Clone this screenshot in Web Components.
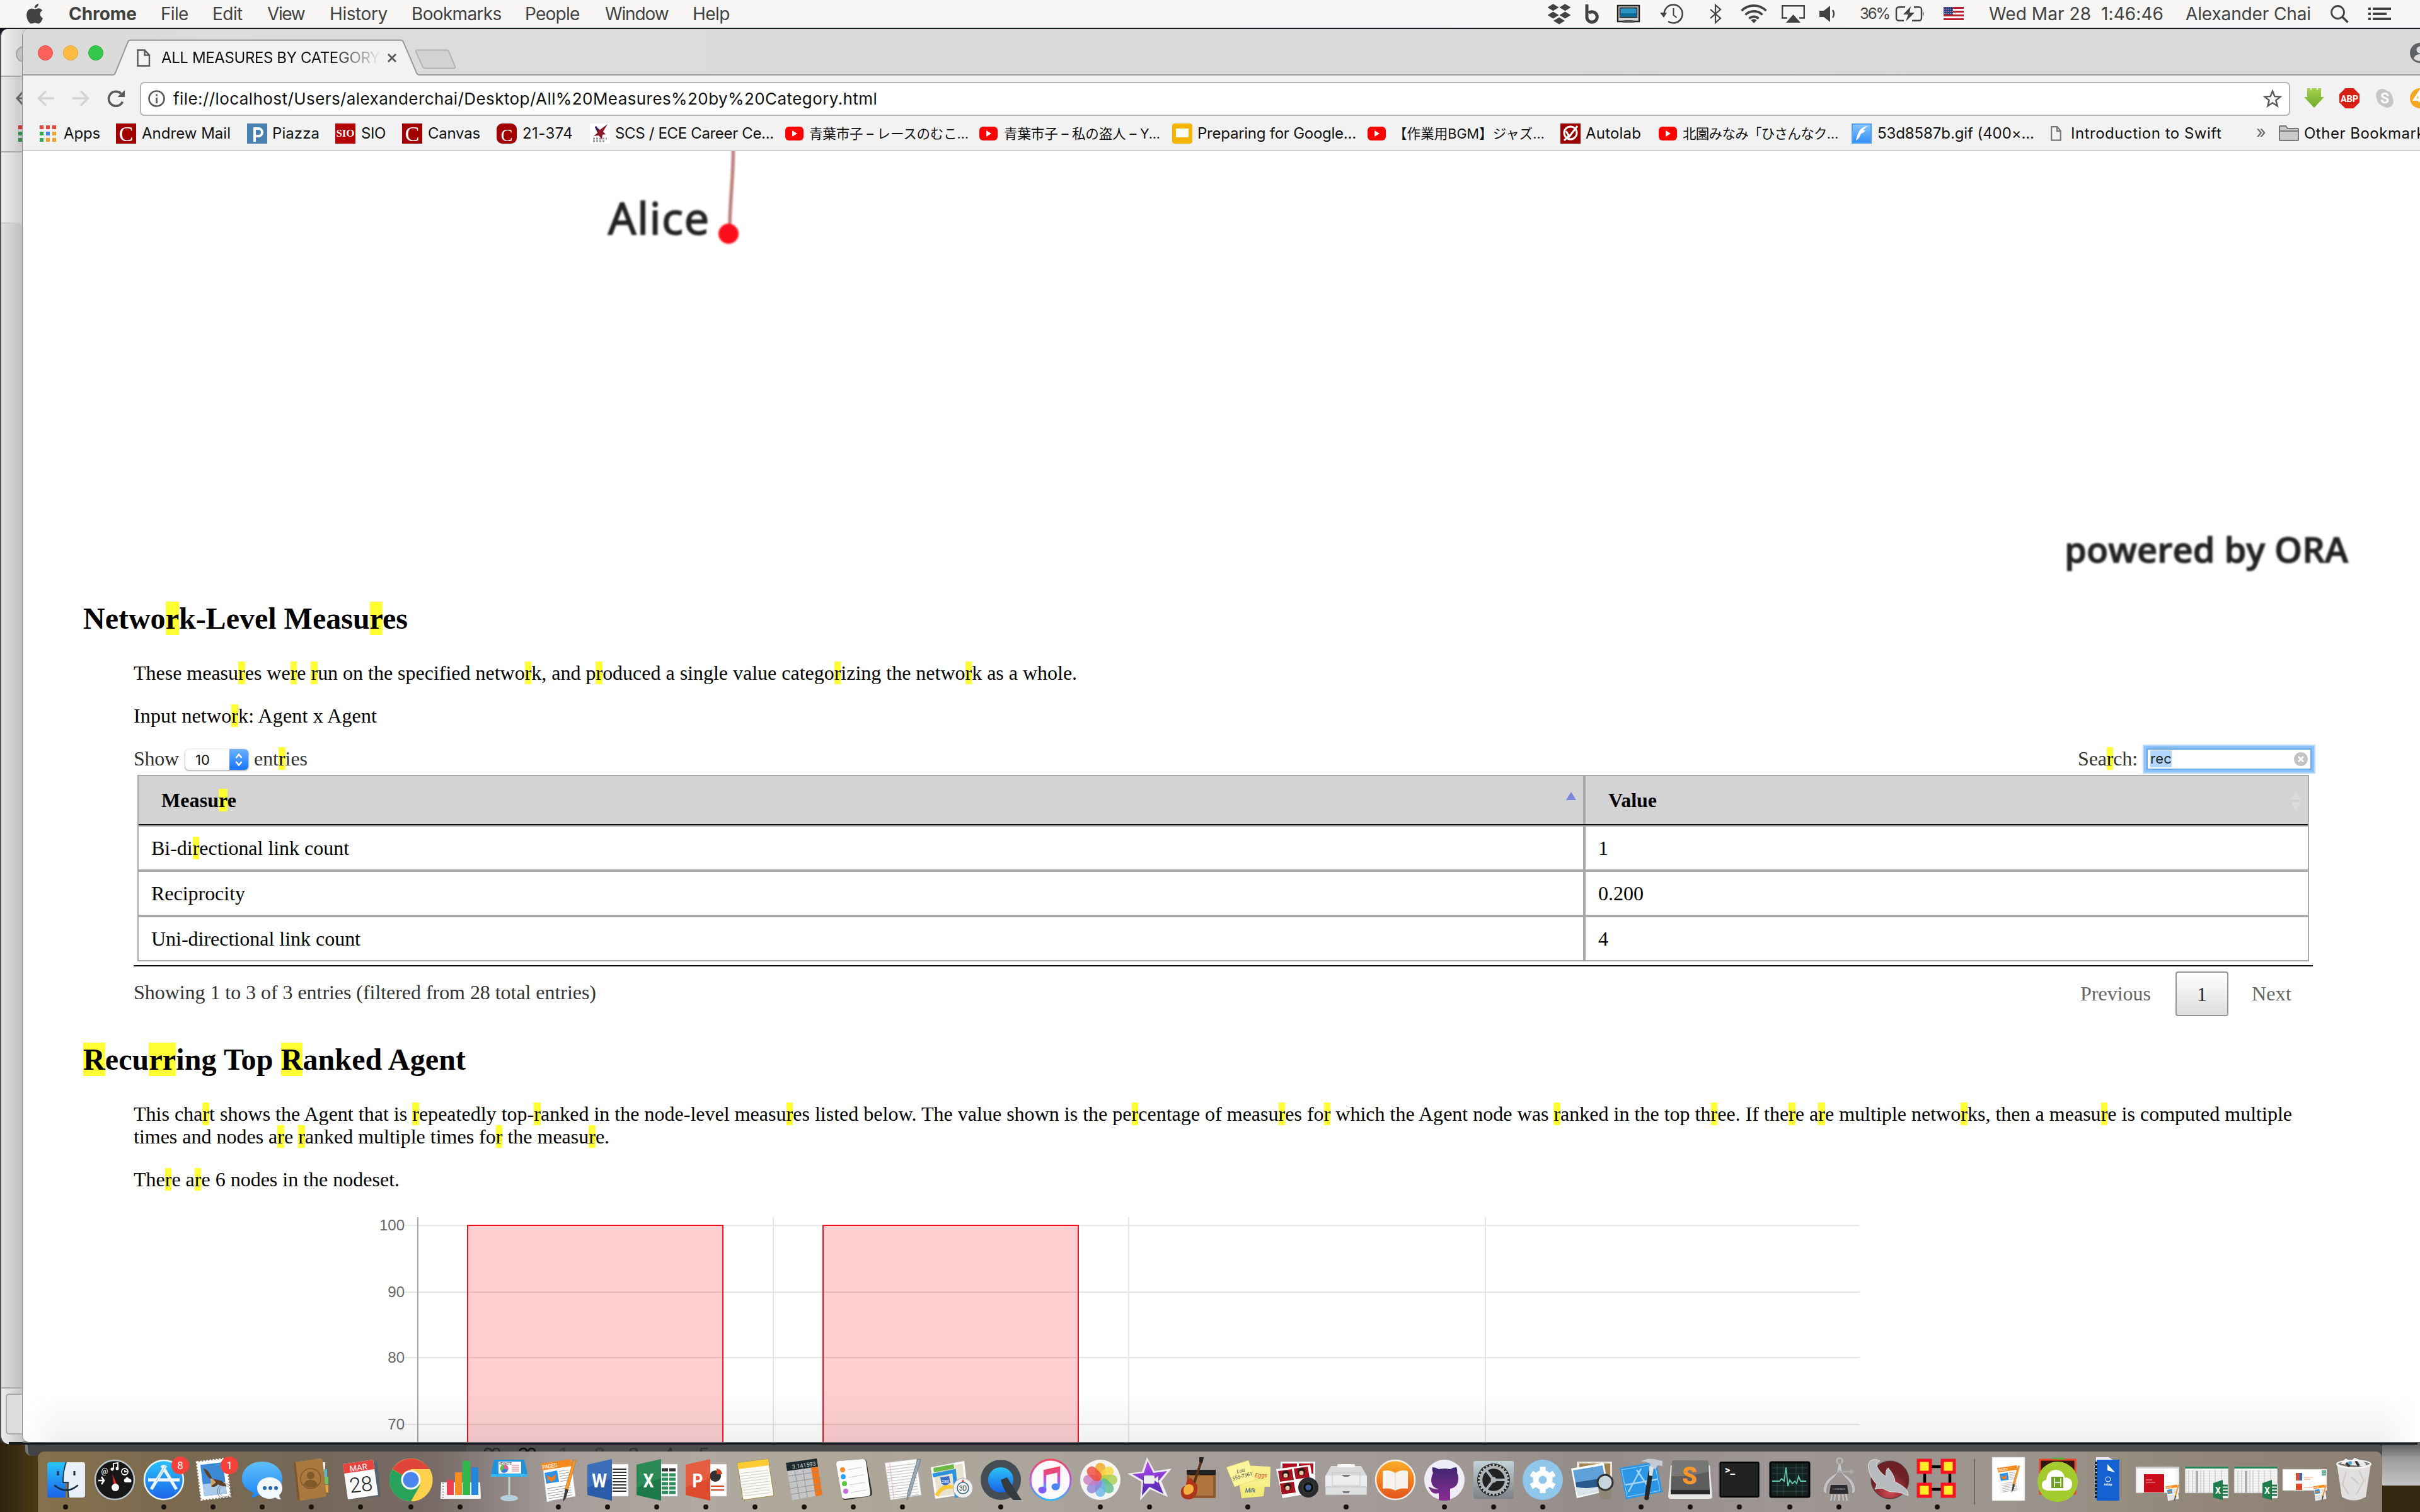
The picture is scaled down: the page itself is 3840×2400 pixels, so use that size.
<!DOCTYPE html>
<html lang="en">
<head>
<meta charset="utf-8">
<title>All Measures by Category</title>
<style>
html,body{margin:0;padding:0}
body{width:3840px;height:2400px;overflow:hidden;background:#3b2f19;font-family:Inter,"Noto Sans CJK JP",sans-serif}
</style>
</head>
<body>
<mac-desktop></mac-desktop>
<script>
const MARK = 'mark{background:#ffff33;color:#000}';
const attach = (el, html) => { el.attachShadow({mode:'open'}).innerHTML = html; };

/* Text whose tracking is adjusted so the run takes a given width. */
class FitText extends HTMLElement {
  connectedCallback() {
    if (!this.shadowRoot) attach(this, '<style>:host{display:inline-block;white-space:pre;flex:none}</style><slot></slot>');
    const w = parseFloat(this.getAttribute('w'));
    if (!w) return;
    const natural = this.getBoundingClientRect().width;
    const n = [...this.textContent].length;
    this.style.letterSpacing = ((w - natural) / Math.max(1, n - 0.5)).toFixed(3) + 'px';
    this.style.width = w + 'px';
  }
}
/* Lays items out left to right: [left edge, width, markup]. */
const strip = (start, items) => {
  let x = start;
  return items.map(([l, w, h]) => {
    const m = l - x; x = l + w;
    return `<span style="flex:none;display:flex;align-items:center;margin-left:${m}px;width:${w}px">${h}</span>`;
  }).join('');
};
const t = (w, s, extra='') => `<fit-text w="${w}" style="${extra}">${s}</fit-text>`;
const svg = (w, h, body, vb) => `<svg width="${w}" height="${h}" viewBox="${vb || `0 0 ${w} ${h}`}" style="display:block;flex:none;overflow:visible">${body}</svg>`;

class MenuBar extends HTMLElement {
  connectedCallback() {
    const c = '#424242';
    const dia = (x,y) => `<path d="M${x} ${y-5.5}l9 5.5-9 5.5-9-5.5z"/>`;
    const flag = `<rect width="32" height="22" fill="#fff"/>` + [0,1,2,3].map(i=>`<rect y="${i*6}" width="32" height="3" fill="#b5202c"/>`).join('') + `<rect width="15" height="12" fill="#343a7c"/>` + [2,5,8,11].map(y=>`<path d="M1.5 ${y-.5}h13" stroke="#cfd0e6" stroke-width="1" stroke-dasharray="1.3 1.6"/>`).join('');
    attach(this, `<style>
:host{display:flex;align-items:center;height:44px;background:#f7f6f5;color:${c};font:400 28px/44px Inter,sans-serif;flex:none}
</style>` + strip(0, [
      [42,26,svg(26,32,`<path fill="${c}" d="M19 0c.3 3-2.700 7-6.200 6.900C12.400 3.600 15.600.4 19 0zM13.300 8.600c1.600 0 3.300-1.300 6-1.300 2.500 0 4.600 1.300 5.900 3.200-5.100 3-4.300 10 .8 12.200C24.600 26.700 22 31.500 19 31.500c-2.200 0-3-1.300-5.600-1.300-2.600 0-3.500 1.300-5.600 1.300C4.200 31.500.200 24.400.200 18.200c0-7 4.300-10.800 8.300-10.800 2.300 0 3.800 1.200 4.800 1.200z"/>`)],
      [109,108,t(108,'Chrome','font-weight:700')],[255,44,t(44,'File')],[337,48,t(48,'Edit')],[424,60,t(60,'View')],[523,92,t(92,'History')],[653,143,t(143,'Bookmarks')],[833,87,t(87,'People')],[960,101,t(101,'Window')],[1099,59,t(59,'Help')],
      [2455,38,svg(38,32,`<g fill="${c}">${dia(9.5,5.700)}${dia(28.5,5.700)}${dia(9.5,18)}${dia(28.5,18)}${dia(19,27)}</g>`)],
      [2515,23,svg(23,32,`<path d="M3 1v21a8.200 8.200 0 1 0 3-7.500" fill="none" stroke="${c}" stroke-width="5"/>`)],
      [2566,36,svg(36,29,`<rect x="1" y="1" width="34" height="25" fill="#d8d8d8" stroke="#222" stroke-width="2.500"/><rect x="4.500" y="4.500" width="27" height="15" fill="#2a97c6" stroke="#111" stroke-width="1.500"/><rect x="5" y="13" width="26" height="6" fill="#106c94"/><path d="M8 28l3-4h14l3 4z" fill="#555"/>`)],
      [2634,38,svg(38,32,`<path d="M7 19A14.500 14.500 0 1 1 13 28" fill="none" stroke="${c}" stroke-width="2.500"/><path d="M0 14h11l-5 8z" fill="${c}"/><path d="M21.500 7v11l5 4" fill="none" stroke="${c}" stroke-width="2"/>`)],
      [2713,19,svg(19,32,`<path d="M1 9l16 14-8 7V2l8 7L1 23" fill="none" stroke="${c}" stroke-width="2.200"/>`)],
      [2762,42,svg(42,30,`<g fill="none" stroke="${c}" stroke-width="3.600"><path d="M1.500 10a27.500 27.500 0 0 1 39 0"/><path d="M7.500 16.500a19 19 0 0 1 27 0"/><path d="M13.500 22.500a10.600 10.600 0 0 1 15 0"/></g><path d="M21 30l-4.500-5a6.500 6.500 0 0 1 9 0z" fill="${c}"/>`)],
      [2827,37,svg(37,28,`<path d="M9 20.500H1.200V1.200h34.600v19.300H28" fill="none" stroke="${c}" stroke-width="2.400"/><path d="M18.500 15L30 28H7z" fill="${c}"/>`)],
      [2887,28,svg(28,26,`<path d="M0 8h7l10-8v26L7 18H0z" fill="${c}"/><path d="M21 7q4 6 0 12" fill="none" stroke="${c}" stroke-width="2.400"/>`)],
      [2951,48,t(48,'36%','font-size:24px')],
      [3008,46,svg(46,24,`<path d="M15 1.200H5a4 4 0 0 0-4 4v13.600a4 4 0 0 0 4 4h8M26 22.800h11a4 4 0 0 0 4-4V5.200a4 4 0 0 0-4-4h-8" fill="none" stroke="${c}" stroke-width="2.400"/><path d="M43 8q3 4 0 8z" fill="${c}"/><path d="M24 0L12 13h8l-4 11 14-14h-8z" fill="${c}"/>`)],
      [3084,32,svg(32,22,flag)],
      [3156,277,t(277,'Wed Mar 28  1:46:46')],[3468,199,t(199,'Alexander Chai')],
      [3698,29,svg(29,29,`<circle cx="11.500" cy="11.500" r="10" fill="none" stroke="${c}" stroke-width="2.800"/><path d="M18.500 18.500l9 9" stroke="${c}" stroke-width="3.400"/>`)],
      [3758,36,svg(36,20,`<g fill="${c}"><path d="M0 0h4v4H0zM0 8h4v4H0zM0 16h4v4H0zM7 0h29v4H7zM7 8h22v4H7zM7 16h29v4H7z"/></g>`)]
    ]));
  }
}

class TabStrip extends HTMLElement {
  connectedCallback() {
    attach(this, `<style>
:host{display:flex;height:74px;position:relative;background:linear-gradient(90deg,#d9dbd9,#dcdcdb 12%,#dddbd9 30%,#dbdbdb 55%,#dbd9d8 70%,#dadada);flex:none;overflow:hidden;border-radius:10px 0 0 0}
.edge{position:absolute;left:0;top:0}
.row{display:flex;align-items:center;height:76px;position:relative}
.fade{width:348px;overflow:hidden;-webkit-mask:linear-gradient(90deg,#000 77%,transparent 100%);mask:linear-gradient(90deg,#000 77%,transparent 100%);font:24px/34px Inter,sans-serif;color:#111;display:block;margin-top:15px}
</style>
<svg class="edge" width="3804" height="74"><path d="M0 72.700H143q3 0 4-3l20-49q1-3 4-3H600q3 0 4 3l21 49q1 3 4 3H3804V75H0z" fill="#f2f2f2"/><path d="M0 72.700H143q3 0 4-3l20-49q1-3 4-3H600q3 0 4 3l21 49q1 3 4 3H3804" fill="none" stroke="#979797" stroke-width="2"/><path d="M626 33.500h46q3 0 4 2l10 24q1 3-2 3h-45q-3 0-4-2l-11-24q-1-3 2-3z" fill="#d2d2d2" stroke="#b2b2b2" stroke-width="2"/></svg>
<div class="row">${strip(36,[
 [60,24,svg(24,24,'<circle cx="12" cy="12" r="11.500" fill="#fc605c" stroke="#e2443f"/>')],
 [100,24,svg(24,24,'<circle cx="12" cy="12" r="11.500" fill="#fdbc40" stroke="#e0a033"/>')],
 [140,24,svg(24,24,'<circle cx="12" cy="12" r="11.500" fill="#34c84a" stroke="#27aa35"/>')],
 [217,22,`<span style="margin-top:16px">${svg(22,28,'<path d="M1.500 1.500h11l7.500 8v17H1.500zM12.500 1.500v8H20" fill="none" stroke="#555" stroke-width="2.400"/>')}</span>`],
 [256,348,'<span class="fade">'+t(347,'ALL MEASURES BY CATEGORY')+'</span>'],
 [614,16,`<span style="margin-top:16px">${svg(16,14,'<path d="M2 1l12 12M14 1L2 13" stroke="#555" stroke-width="2.800"/>')}</span>`],
 [3824,32,svg(32,32,'<circle cx="16" cy="16" r="16" fill="#5f6368"/><circle cx="16" cy="11" r="5.500" fill="#ddd"/><path d="M6 25q2-7 10-7t10 7q-4 4-10 4t-10-4z" fill="#ddd"/>')]
])}</div>`);
  }
}

class ToolBar extends HTMLElement {
  connectedCallback() {
    attach(this, `<style>
:host{display:flex;align-items:center;height:72px;background:#f2f2f2;flex:none}
.omni{display:flex;align-items:center;box-sizing:border-box;width:3412px;height:54px;border:2px solid #b6b6b6;border-radius:7px;background:#fff;font:26px/50px Inter,sans-serif;color:#111;margin-top:1px}
</style>${strip(36,[
 [59,27,svg(27,26,'<path d="M27 13H3M14 1.500L2.500 13 14 24.500" fill="none" stroke="#d3d3d3" stroke-width="3.400"/>')],
 [115,27,svg(27,26,'<path d="M0 13h24M13 1.500L24.500 13 13 24.500" fill="none" stroke="#d3d3d3" stroke-width="3.400"/>')],
 [170,29,svg(29,27,'<path d="M24.500 18.500A11.500 11.500 0 1 1 22 5.500" fill="none" stroke="#5a5a5a" stroke-width="3.600"/><path d="M28 0v11H16.500z" fill="#5a5a5a"/>')],
 [222,3412,`<div class="omni">${strip(224,[[235,27,svg(27,27,'<circle cx="13.500" cy="13.500" r="12" fill="none" stroke="#5a5a5a" stroke-width="2.600"/><path d="M13.500 6.500v3M13.500 12v9" stroke="#5a5a5a" stroke-width="2.800"/>')],
   [275,1116,t(1117,'file://localhost/Users/alexanderchai/Desktop/All%20Measures%20by%20Category.html')],
   [3591,30,svg(30,29,'<path d="M15 2.500l3.400 8.500 9 .6-7 5.700 2.300 8.900-7.700-5-7.700 5 2.300-8.900-7-5.700 9-.6z" fill="none" stroke="#5a5a5a" stroke-width="2.500"/>')]])}</div>`],
 [3656,32,svg(32,32,'<defs><linearGradient id="g" x2="0" y2="1"><stop offset="0" stop-color="#a6d04d"/><stop offset="1" stop-color="#6fa92b"/></linearGradient></defs><path d="M5 0h5v3h2V0h8v3h2V0h5v14h5L16 31 0 14h5z" fill="url(#g)"/>')],
 [3712,32,svg(32,32,'<path d="M9.500 0h13L32 9.500v13L22.500 32h-13L0 22.500v-13z" fill="#d81f14"/><text x="16" y="21.500" font-family="Roboto,sans-serif" font-weight="700" font-size="14.500" fill="#fff" text-anchor="middle" textLength="28">ABP</text>')],
 [3768,32,svg(32,32,'<circle cx="12" cy="11" r="10" fill="#c6c6c6"/><circle cx="20" cy="21" r="10" fill="#c6c6c6"/><circle cx="16" cy="16" r="12.500" fill="#c6c6c6"/><text x="16" y="24" font-family="Roboto,sans-serif" font-weight="700" font-size="23" fill="#fff" text-anchor="middle">S</text>')],
 [3824,32,svg(32,32,'<circle cx="16" cy="16" r="16" fill="#f5a623"/><path d="M15 6v16M7 18L15 6v12z" stroke="#fff" stroke-width="3.500" fill="none"/>')]
])}`);
  }
}

class BookmarkBar extends HTMLElement {
  connectedCallback() {
    const yt = svg(30,22,'<rect width="29" height="22" rx="6" fill="#f00"/><path d="M11 6l8 5-8 5z" fill="#fff"/>');
    const C = (r) => svg(32,32,`<rect width="32" height="32" rx="${r}" fill="#a00000"/><text x="16" y="27.500" font-family="Liberation Serif,serif" font-size="${r?28:34}" fill="#fff" text-anchor="middle">C</text>`);
    const apps = svg(26,26, ['#ea4335','#ea4335','#ea4335','#34a853','#4285f4','#f0a020','#34a853','#f0a020','#f0a020'].map((c,i)=>`<rect x="${(i%3)*10}" y="${Math.floor(i/3)*10}" width="6" height="6" fill="${c}"/>`).join(''));
    const cjk = 'font-size:21.5px';
    const items = [
      [63,26,apps],[101,58,t(58,'Apps')],
      [184,32,C(0)],[225,141,t(141,'Andrew Mail')],
      [392,32,svg(32,32,'<rect width="32" height="32" fill="#4a80b0"/><path d="M12 29V8h6a5.500 5.500 0 0 1 0 12h-6" fill="none" stroke="#fff" stroke-width="4"/>')],[432,75,t(75,'Piazza')],
      [532,32,svg(32,32,'<rect width="32" height="32" fill="#b30000"/><text x="16" y="21" font-family="Liberation Serif,serif" font-weight="700" font-size="17" fill="#fff" text-anchor="middle" textLength="29">SIO</text>')],[573,39,t(39,'SIO')],
      [638,32,C(0)],[679,83,t(83,'Canvas')],
      [788,32,C(9)],[829,80,t(80,'21-374')],
      [936,32,svg(32,32,'<rect width="32" height="32" fill="#fff"/><path d="M28 1l-7 12 4 4-5 1-1 7-5-6-8 1 6-5-4-11 8 6z" fill="#8b1a2b"/><path d="M9 5l4 7" stroke="#302060" stroke-width="3"/><path d="M5 24h22M5 28h20" stroke="#999" stroke-width="3" stroke-dasharray="3 2"/>')],[976,252,t(252,'SCS / ECE Career Ce...')],
      [1246,30,yt],[1284,253,t(253,'青葉市子 – レースのむこ…',cjk)],
      [1554,30,yt],[1593,248,t(248,'青葉市子 – 私の盗人 – Y...',cjk)],
      [1860,32,svg(32,32,'<rect width="32" height="32" rx="4" fill="#f5b400"/><rect x="6" y="8" width="20" height="14" fill="#fff"/>')],[1900,252,t(252,'Preparing for Google...')],
      [2170,30,yt],[2211,240,t(240,'【作業用BGM】ジャズ…',cjk)],
      [2476,32,svg(32,32,'<rect width="32" height="32" fill="#900"/><circle cx="16" cy="15" r="10" fill="none" stroke="#fff" stroke-width="3"/><path d="M9 12l5 9L27 4M6 27l9-9" fill="none" stroke="#fff" stroke-width="3"/>')],[2516,88,t(88,'Autolab')],
      [2632,30,yt],[2670,247,t(247,'北園みなみ「ひさんなク…',cjk)],
      [2938,32,svg(32,32,'<defs><linearGradient id="b" x2="0" y2="1"><stop offset="0" stop-color="#8cc8fb"/><stop offset="1" stop-color="#2f8cf5"/></linearGradient></defs><rect width="32" height="32" fill="url(#b)"/><rect x="1" y="1" width="30" height="30" fill="none" stroke="#4da2f6" stroke-width="2"/><path d="M7 27C10 14 14 5 26 4c-5 3-5 5-8 7h4c-2 3-4 4-7 5-2 5-4 9-8 11z" fill="#fff"/>')],[2979,249,t(249,'53d8587b.gif (400×...')],
      [3254,17,svg(17,24,'<path d="M1.200 1.200h9l5.500 6.500v15H1.200zM10 1.200v7h6" fill="none" stroke="#777" stroke-width="2.200"/>')],[3286,239,t(239,'Introduction to Swift')],
      [3580,16,t(16,'»','color:#666;font-size:27px;margin-top:-3px')],
      [3616,32,svg(32,25,'<path d="M1 23V2q0-1 1-1h9l3 4h16q1 0 1 1v17q0 1-1 1H2q-1 0-1-1z" fill="#cbcbcb" stroke="#777" stroke-width="2"/><path d="M1 9h30" stroke="#777" stroke-width="2"/>')],[3656,205,t(205,'Other Bookmarks')]
    ];
    attach(this, `<style>:host{display:flex;align-items:center;padding-bottom:7px;background:#f2f2f2;border-bottom:2px solid #cfcfcf;font:24px/36px Inter,"Noto Sans CJK JP",sans-serif;color:#111;flex:none;overflow:hidden;box-sizing:border-box;height:48px}</style>` + strip(36, items));
  }
}

class NetworkGraph extends HTMLElement {
  connectedCallback() {
    attach(this, `<style>:host{display:block;height:714px}</style>
<svg width="3804" height="714" viewBox="36 240 3804 714" style="display:block">
<g style="filter:blur(1.400px)"><path d="M1163.500 232C1164 280 1158 320 1158 360" fill="none" stroke="#b98080" stroke-width="5.500"/>
<circle cx="1156" cy="371" r="16" fill="#fc0d1b"/>
<text x="965" y="372" font-family="Open Sans,sans-serif" font-size="70" fill="#222" stroke="#222" stroke-width="2" textLength="160">Alice</text>
<text x="3276" y="893" font-family="Open Sans,sans-serif" font-weight="600" font-size="56" fill="#222" stroke="#222" stroke-width="1.200" textLength="450">powered by ORA</text></g></svg>`);
  }
}

class PageSection extends HTMLElement {
  connectedCallback() {
    attach(this, `<style>
:host{display:block;padding-left:96px;font-family:"Liberation Serif",serif;color:#000}
.h{font-weight:700;font-size:48px;line-height:56px;height:56px;display:flex;margin-bottom:40px}
.b{padding-left:80px;font-size:32px;line-height:36px;width:3458px}
</style><div class="h"><slot name="title"></slot></div><div class="b"><slot></slot></div>`);
  }
}

class DataTable extends HTMLElement {
  connectedCallback() {
    const row = (a,b,last) => `<div class="r" style="border-bottom-width:${last?2:4}px"><div class="a">${a}</div><div class="v">${b}</div></div>`;
    attach(this, `<style>${MARK}
:host{display:block;font:32px/36px "Liberation Serif",serif;color:#000}
.ctl{display:flex;justify-content:space-between;height:36px;color:#333}
.g{display:flex;align-items:center}
.sel{display:flex;box-sizing:border-box;width:100px;height:33px;background:#fff;border-radius:6px;box-shadow:0 1px 2px 1px rgba(0,0,0,.28);font:22px/34px Inter,sans-serif;color:#111;margin:3px 9px 0 10px;overflow:hidden}
.sel span{flex:1;padding-left:16px}
.sel i{display:flex;width:30px;background:linear-gradient(#6bb1fb,#1676fd);align-items:center;justify-content:center}
.inp{display:flex;align-items:center;box-sizing:border-box;width:262px;height:34px;background:#fff;border:2px solid #67a9ea;box-shadow:0 0 0 4px #8cc1fa,0 0 1px 6px #b9dafb;margin:1px 2px 0 14px;padding:0 4px 0 4px;justify-content:space-between;font:22px/27px Inter,sans-serif;color:#222}
.inp b{font-weight:400;background:#b3d7ff}
.t{margin:8px 6px 6px;border:solid #a9a9a9;border-width:2px 2px 0}
.hd{display:flex;height:76px;background:#d3d3d3;border-bottom:2px solid #111;font-weight:700;box-shadow:0 2px 0 #a9a9a9;margin-bottom:2px}
.hd>div,.r>div{display:flex;align-items:center;box-sizing:border-box}
.a{width:2296px;border-right:4px solid #a9a9a9;padding-left:20px;flex:none}
.v{flex:1;padding-left:20px}
.hd .a,.hd .v{padding-left:36px;justify-content:space-between}
.r{display:flex;height:68px;border-bottom:4px solid #a9a9a9}
.ft{border-top:2px solid #111;height:122px;display:flex;justify-content:space-between;color:#333;align-items:flex-start;box-sizing:border-box}
.pg{display:flex;align-items:center;height:70px;margin-top:8px;padding-right:34px;color:#666}
.n{box-sizing:border-box;width:84px;height:71px;border:2px solid #979797;border-radius:4px;background:linear-gradient(#fff,#dcdcdc);display:flex;align-items:center;justify-content:center;margin:1px 37px 0 39px;color:#333}
</style>
<div class="ctl"><div class="g">${t(72,'Show')}<div class="sel"><span>10</span><i>${svg(14,22,'<path d="M2.500 8L7 2.500 11.500 8M2.500 14L7 19.500 11.500 14" fill="none" stroke="#fff" stroke-width="2.600"/>')}</i></div>${t(85,'ent<mark>r</mark>ies')}</div>
<div class="g">${t(95,'Sea<mark>r</mark>ch:')}<div class="inp"><b>${t(34,'rec')}</b>${svg(22,22,'<circle cx="11" cy="11" r="11" fill="#c3c3c3"/><path d="M7 7l8 8M15 7l-8 8" stroke="#fff" stroke-width="2.600"/>')}</div></div></div>
<div class="t"><div class="hd"><div class="a">${t(119,'Measu<mark>r</mark>e')}<span style="margin:-14px 11px 0 0">${svg(16,13,'<path d="M8 0l8 13H0z" fill="#7a82da"/>')}</span></div><div class="v">${t(77,'Value')}<span style="margin:2px 11px 0 0">${svg(16,30,'<path d="M8 0l8 13H0zM0 17h16L8 30z" fill="#dcdcdc"/>')}</span></div></div>
${row(t(314,'Bi-di<mark>r</mark>ectional link count'),'1')}${row(t(149,'Reciprocity'),'0.200')}${row(t(332,'Uni-directional link count'),'4',1)}</div>
<div class="ft"><div style="margin-top:23px">${t(734,'Showing 1 to 3 of 3 entries (filtered from 28 total entries)')}</div><div class="pg">${t(112,'Previous')}<div class="n">1</div>${t(63,'Next')}</div></div>`);
  }
}

class BarChart extends HTMLElement {
  connectedCallback() {
    const ys = [[1945,100],[2051,90],[2155,80],[2261,70]];
    attach(this, `<style>:host{display:block;margin-left:-176px}</style>
<svg width="3804" height="399" viewBox="36 1890 3804 399" style="display:block">
${ys.map(([y,n])=>`<path d="M642 ${y}H2951" stroke="#e4e4e4" stroke-width="2"/><text x="642" y="${y+8}" text-anchor="end" font-family="Liberation Sans,sans-serif" font-size="24" fill="#666">${n}</text>`).join('')}
${[1227,1791,2357].map(x=>`<path d="M${x} 1932V2289" stroke="#e4e4e4" stroke-width="2"/>`).join('')}
<path d="M663 1932V2289" stroke="#a8a8a8" stroke-width="2"/>
${[742,1306].map(x=>`<path d="M${x} 2300V1945h405V2300" fill="rgba(247,0,12,.19)" stroke="#f7101f" stroke-width="2"/>`).join('')}
</svg>`);
  }
}

class BrowserWindow extends HTMLElement {
  connectedCallback() {
    attach(this, `<style>${MARK}
:host{display:flex;flex-direction:column;box-sizing:border-box;width:3804px;height:2243px;background:#fff;border-radius:10px 0 0 10px;overflow:hidden;position:relative}
.sh{position:absolute;left:0;right:0;bottom:0;height:80px;background:linear-gradient(transparent,rgba(0,0,0,.06));-webkit-mask:linear-gradient(90deg,transparent,#000 60px,#000 3740px,transparent);mask:linear-gradient(90deg,transparent,#000 60px,#000 3740px,transparent)}
p{margin:0 0 32px;display:flex;flex-direction:column;align-items:flex-start}
</style><tab-strip></tab-strip><tool-bar></tool-bar><bookmark-bar></bookmark-bar>
<network-graph></network-graph>
<page-section><fit-text slot="title" w="515">Netwo<mark>r</mark>k-Level Measu<mark>r</mark>es</fit-text>
<p>${t(1497,'These measu<mark>r</mark>es we<mark>r</mark>e <mark>r</mark>un on the specified netwo<mark>r</mark>k, and p<mark>r</mark>oduced a single value catego<mark>r</mark>izing the netwo<mark>r</mark>k as a whole.')}</p>
<p>${t(386,'Input netwo<mark>r</mark>k: Agent x Agent')}</p>
<data-table></data-table></page-section>
<page-section><fit-text slot="title" w="607"><mark>R</mark>ecu<mark>rr</mark>ing Top <mark>R</mark>anked Agent</fit-text>
<p>${t(3425,'This cha<mark>r</mark>t shows the Agent that is <mark>r</mark>epeatedly top-<mark>r</mark>anked in the node-level measu<mark>r</mark>es listed below. The value shown is the pe<mark>r</mark>centage of measu<mark>r</mark>es fo<mark>r</mark> which the Agent node was <mark>r</mark>anked in the top th<mark>r</mark>ee. If the<mark>r</mark>e a<mark>r</mark>e multiple netwo<mark>r</mark>ks, then a measu<mark>r</mark>e is computed multiple')}${t(755,'times and nodes a<mark>r</mark>e <mark>r</mark>anked multiple times fo<mark>r</mark> the measu<mark>r</mark>e.')}</p>
<p style="margin:0">${t(422,'The<mark>r</mark>e a<mark>r</mark>e 6 nodes in the nodeset.')}</p>
<bar-chart></bar-chart></page-section><div class="sh"></div>`);
  }
}

/* The sliver of a second window that shows left of the front one. */
class BackWindow extends HTMLElement {
  connectedCallback() {
    attach(this, `<style>
:host{display:flex;flex-direction:column;box-sizing:border-box;width:60px;height:2246px;border-left:2px solid #4b5560;border-radius:12px 0 0 14px;overflow:hidden;background:#d5d5d5}
div{box-sizing:border-box;flex:none;border-bottom:2px solid #a9a9a9}
</style><div style="height:76px;background:linear-gradient(90deg,#f2f2f2,#d6d6d6 34px);border-radius:10px 0 0 0">${svg(34,74,'<circle cx="36" cy="40" r="12" fill="#c2c2c2" stroke="#a2a2a2" stroke-width="2"/>')}</div>
<div style="height:120px;background:linear-gradient(90deg,#ececec,#c8c8c8 34px)">${svg(34,118,'<path d="M36 22L25 34l11 12M25 34h10" fill="none" stroke="#666" stroke-width="3"/><rect x="27" y="77" width="7" height="6" fill="#c33"/><path d="M27 87h7v6h-7zM27 97h7v6h-7z" fill="#2c8a49"/>')}</div>
<div style="height:113px;background:linear-gradient(90deg,#eee,#ccc 34px);border-color:#ccc"></div>
<div style="flex:1;background:linear-gradient(90deg,#e0e0e0,#bdbdbd 34px)"></div>
<div style="height:88px;background:linear-gradient(90deg,#ededed,#c4c4c4 34px);border:0">${svg(34,88,'<path d="M40 9H13q-5 0-5 5v53q0 5 5 5h27" fill="#ddd" stroke="#aaa" stroke-width="2"/>')}</div>`);
  }
}

class DockBar extends HTMLElement {
  connectedCallback() {
    const tx = (x,y,s,size,fill,o='') => `<text x="${x}" y="${y}" font-family="Roboto,sans-serif" font-size="${size}" fill="${fill}" text-anchor="middle" ${o}>${s}</text>`;
    const badge = (n) => `<circle cx="26" cy="22" r="14" fill="#f6413b"/>` + tx(26,28,n,17,'#fff');
    const lines = (x,y,w,n,g,c='#bbb',sw=1) => Array.from({length:n},(_,i)=>`<path d="M${x} ${y+i*g}h${w}" stroke="${c}" stroke-width="${sw}"/>`).join('');
    const pages = (s=1) => `<g transform="translate(-30 12) scale(${s})"><path d="M5 9L50 1l7 58-45 9z" fill="#fff" stroke="#ccc" stroke-width=".7"/><path d="M2 7L50 0l2 11L4 18z" fill="#f58a1f"/><text transform="rotate(-9 6 16)" x="5" y="16" font-family="Roboto,sans-serif" font-size="9" fill="#fff" textLength="24">PAGES</text><path d="M8 22l20-4 3 18-20 3z" fill="#2e93e8"/><path d="M12 26l7 3 7-5-1 8-6 4-6-4z" fill="#f37a1d"/><g transform="rotate(-9 30 40)">${lines(34,20,16,5,4,'#999')}${lines(11,44,38,6,4,'#999')}</g><path d="M54 1l4 1-13 48-5-1z" fill="#f59a2a" stroke="#b66a12" stroke-width=".6"/><path d="M41 47l5 1-4 14-5 6z" fill="#3a3a3a"/></g>`;
    const office = (c1,c2,l,right) => `<rect x="4" y="20" width="29" height="51" fill="#fff" stroke="#bbb" stroke-width=".5"/>${right}<path d="M-32 21L7 12v66l-39-9z" fill="${c1}"/><path d="M-32 21L7 12v30l-39 15z" fill="${c2}" opacity=".35"/>${tx(-13,57,l,31,'#fff','font-weight="700" textLength="'+(l==='W'?24:17)+'" lengthAdjust="spacingAndGlyphs"')}`;
    const mini = (x) => `<g transform="translate(${x} 46)"><rect x="10" y="4" width="14" height="24" fill="#fff" stroke="#bbb" stroke-width=".5"/><path d="M12 8h11M12 13h11M12 18h11M12 23h11" stroke="#217346" stroke-width="3"/><path d="M0 4l15-5v32L0 27z" fill="#1f7d4b"/><text x="7.500" y="21" text-anchor="middle" font-family="Roboto" font-weight="700" font-size="14" fill="#fff">X</text></g>`;
    const petals = ['#f5a623','#f8d83a','#a6cf4d','#5dbd8d','#6ab6e8','#8d83d8','#c97cc0','#ef4d3c'].map((c,i)=>`<rect x="-8" y="18" width="16" height="27" rx="8" fill="${c}" opacity=".82" transform="rotate(${i*45} 0 45)"/>`).join('');
    const teeth = (n,r,w,h,c,cy=45) => Array.from({length:n},(_,i)=>`<rect x="${-w/2}" y="${cy-r-h}" width="${w}" height="${h+3}" fill="${c}" transform="rotate(${i*360/n} 0 ${cy})"/>`).join('');
    const sheet = (body) => `<rect x="-34" y="24" width="69" height="42" fill="#f5f5f5" stroke="#999" stroke-width=".8"/>${body}`;
    const excelWin = sheet(`<path d="M-34 24h69v3h-69z" fill="#21885a"/>${lines(-33,31,67,9,4,'#ddd',.8)}<path d="M-28 30v36M-22 30v36M-16 30v36M-9 30v36M-4 30v36M5 30v36M14 30v36M24 30v36" stroke="#bbb"/><rect x="-17" y="31" width="4" height="34" fill="#aaa"/>`) + mini(11);
    const G = {
      finder:`<path d="M-25 17H0V73h-25q-4 0-4-4V21q0-4 4-4z" fill="url(#fb)"/><path d="M2 17H27q4 0 4 4v48q0 4-4 4H5Q2 62 3 49H-4Q-4 30 2 17z" fill="#e9f0f8"/><path d="M1 17q-5 14-5 32h8q-1 12 1 24" fill="none" stroke="#16384e" stroke-width="1.800"/><path d="M-12 31v7M14 31v7" stroke="#102a40" stroke-width="3"/><path d="M-17 54Q1 69 19 54" fill="none" stroke="#102a40" stroke-width="2.500" stroke-linecap="round"/>`,
      dash:`<circle cy="45" r="31" fill="#161616" stroke="#b8c5cd" stroke-width="2.500"/><path d="M-4 36L-1 53q2 7 5 0z" fill="#f22c2c"/><circle cx="1" cy="57" r="6" fill="#fff"/><g fill="none" stroke="#fff" stroke-width="1.800"><circle cx="16" cy="32" r="5"/><path d="M16 29v3h3M-2 28V19l7-1v9"/></g><circle cx="-4" cy="28" r="2.500" fill="#fff"/><circle cx="4" cy="27" r="2.500" fill="#fff"/>${tx(-16,35,'@',12,'#fff')}<path d="M-26 46h10M-21 40l4 6-4 6" stroke="#fff" stroke-width="2.500" fill="none"/><path d="M16 49h10q2-5-3-6-4-5-6 0-4 1-1 6z" fill="#fff"/>`,
      store:`<circle cy="45" r="31" fill="url(#fb)" stroke="#eef6fc" stroke-width="2.500"/><path d="M-20 60L3 22M20 60L-3 22M-25 45h50" stroke="#eff7ff" stroke-width="5"/><path d="M-12 47L3 22" stroke="#8dbce8" stroke-width="1"/>${badge(8)}`,
      mail:`<g transform="rotate(-7 0 45)"><rect x="-22" y="14" width="46" height="60" fill="#fff"/><rect x="-22" y="14" width="46" height="60" fill="none" stroke="#fff" stroke-width="3" stroke-dasharray="3 2"/><rect x="-17" y="19" width="36" height="50" fill="#3c8ad6"/><rect x="-17" y="50" width="36" height="19" fill="#a7cbe8"/><path d="M-13 25q8 2 12 18l9 3q10 3 12 12-9-1-13-5-5 5-11 2 3-4 2-10-8-7-11-20z" fill="#5c4023"/><path d="M-4 42q6 2 8 8l-8 4z" fill="#c9a26a"/></g><circle cx="19" cy="63" r="12" fill="none" stroke="#555" stroke-width="1" opacity=".7"/><circle cx="19" cy="63" r="9" fill="none" stroke="#555" stroke-width="1" opacity=".5"/>${badge(1)}`,
      msg:`<path d="M0 16c18 0 32 11 32 27S18 70 0 70q-4 0-7-1-4 4-11 4 4-3 4-8C-25 61-32 53-32 43-32 27-18 16 0 16z" fill="url(#mb)"/><path d="M12 41c11 0 20 7 20 17q0 7-5 11 0 4 3 7-6 0-9-3-4 2-9 2C1 75-8 68-8 58S1 41 12 41z" fill="#f1f8fe"/><g fill="#1f67b5"><circle cx="4" cy="58" r="3"/><circle cx="13" cy="58" r="3"/><circle cx="22" cy="58" r="3"/></g>`,
      contacts:`<path d="M14 17h8v18h-8z" fill="#eee"/><path d="M20 28h5v12h-5z" fill="#56b9c4"/><path d="M21 40h6v12h-6z" fill="#6cc25c"/><path d="M20 53h7v12h-7z" fill="#e9a83a"/><path d="M-28 17L14 11q4 0 4 4l6 53q0 4-4 4l-36 6q-4 0-4-4z" fill="#a97940"/><path d="M-28 17l3 0 7 61q-4 0-4-4z" fill="#7d562a"/><circle cx="-1" cy="43" r="16" fill="none" stroke="#80582a" stroke-width="1.500"/><circle cx="-1" cy="38" r="6" fill="#80582a"/><path d="M-12 53q2-8 11-8t11 8q-11 9-22 0z" fill="#80582a"/>`,
      cal:`<path d="M-22 20L27 15l5 56-50 5z" fill="#59636b"/><path d="M-28 20L20 13l8 56-48 7z" fill="#fafafa"/><path d="M-28 20L20 13l2 15-48 7z" fill="#e94340"/><text transform="rotate(-8 -2 28)" x="-3" y="30" font-family="Roboto,sans-serif" font-size="13" fill="#fff" text-anchor="middle">MAR</text><text transform="rotate(-6 0 55)" x="1" y="64" font-family="Roboto,sans-serif" font-size="33" fill="#222" text-anchor="middle" font-weight="300">28</text>`,
      chrome:`<circle cy="45" r="34" fill="#fdd14b"/><path d="M0 45L-29 28A34 34 0 0 1 29.500 28H0z" fill="#e0453a"/><path d="M-29.500 28A34 34 0 0 0 1 79L15 53 0 45z" fill="#28a35b"/><path d="M0 28H30A34 34 0 0 1 0 79L15 53z" fill="#fdd14b"/><circle cy="45" r="15.500" fill="#fff"/><circle cy="45" r="12.500" fill="#4b86ee"/>`,
      numbers:`<path d="M-30 49h62l1 26h-64z" fill="#f4f4f4"/><rect x="-21" y="45" width="11" height="24" fill="#ee4052"/><rect x="-8" y="33" width="11" height="36" fill="#f78c22"/><rect x="4" y="15" width="12" height="54" fill="#30b94a"/><rect x="18" y="25" width="11" height="44" fill="#2387dc"/><path d="M-27 50v24" stroke="#888" stroke-width="2" stroke-dasharray="1.500 3"/>`,
      keynote:`<path d="M-24 13H24l5 23h-58z" fill="#1f92dc"/><path d="M-29 36h58v4h-58z" fill="#38b8ec"/><rect x="-17" y="16" width="36" height="19" fill="#fff"/>${tx(-6,21,'KEYNOTE',4.500,'#333')}<circle cx="-8" cy="27" r="6.500" fill="#5fbf4a"/><path d="M-8 27v-6.500a6.500 6.500 0 0 1 6 9z" fill="#e85a9a"/><path d="M-8 27l6 2a6.500 6.500 0 0 1-11 3z" fill="#3a7ee0"/>${lines(4,22,12,4,3,'#d77')}<path d="M0 40v32" stroke="#c6cdd2" stroke-width="3"/><ellipse cy="74" rx="14" ry="5" fill="#b5cfdd"/>`,
      pages:pages(),
      word:office('#2a5caa','#5e8fd6','W',lines(8,28,22,8,5,'#333',2)),
      excel:office('#1d7a48','#48a874','X',lines(8,29,22,1,5,'#333',5)+lines(8,37,22,5,7,'#2e8f5c',5)+'<path d="M19 24v44" stroke="#fff" stroke-width="2"/>'),
      ppt:office('#dd4b2f','#f28165','P','<circle cx="15" cy="39" r="9" fill="#333"/><path d="M17 36v-9a9 9 0 0 1 9 9z" fill="#d24726"/><path d="M8 55h21M8 61h21" stroke="#d24726" stroke-width="2"/>'),
      notes:`<path d="M-28 18L21 12l9 58-49 7z" fill="#fbfaf4" stroke="#9b8a40" stroke-width="1"/><path d="M-28 18L21 12l1 10-49 6z" fill="#fbcd33"/><g transform="rotate(-7 0 45)">${lines(-22,32,44,9,4.500,'#ccc')}</g>`,
      calc:`<path d="M-29 18L20 11l9 58-48 8z" fill="#c3c5c7"/><path d="M-29 18L20 11l2 13-49 7z" fill="#1e2a2e"/><text transform="rotate(-8 0 25)" x="19" y="25" text-anchor="end" font-family="Roboto,sans-serif" font-size="9" fill="#cdd6d8">3.141593</text><path d="M11 26l11-2 7 45-11 2z" fill="#f0761e"/><path d="M-25 39l49-7M-24 49l50-8M-22 59l50-8M-21 68l50-8M-15 30l8 45M-2 28l7 45" fill="none" stroke="#8c8e91" stroke-width=".9"/>`,
      remind:`<path d="M-26 20q0-4 4-5L16 12q4 0 5 4l9 50q0 4-4 5l-38 6q-5 0-5-4z" fill="#333"/><path d="M-27 20q0-4 4-5L15 12q4 0 5 4l7 50q0 4-4 5l-36 4q-5 0-5-4z" fill="#fbfbfb"/><circle cx="-17" cy="29" r="4" fill="#f68a28"/><circle cx="-16" cy="40" r="4" fill="#2ea0ee"/><circle cx="-14" cy="51" r="4" fill="#5acb3e"/><circle cx="-12" cy="63" r="4" fill="#c46ddb"/><path d="M-9 29l23-4M-8 41l25-4M-6 53l25-4M-4 65l25-4" stroke="#ccc"/>`,
      textedit:`<path d="M-28 18L22 12l8 57-49 8z" fill="#fcfcfc" stroke="#bbb" stroke-width=".6"/><g transform="rotate(-7 0 45)">${lines(-23,22,46,12,4.500,'#b9bcc4')}<path d="M-17 16v58" stroke="#efb0b0"/></g><path d="M24 12l5 1-17 56-5 8 1-11z" fill="#9aa9b4" stroke="#5d6b75" stroke-width=".8"/>`,
      maps:`<path d="M-33 25L20 15l6 52-52 8z" fill="#fff"/><path d="M-30 28L17 19l6 46-45 7z" fill="#e8e2cf"/><path d="M-29 26l32-6 1 7-32 6z" fill="#6fb847"/><path d="M-30 38L4 31l4 42" fill="none" stroke="#2b93dd" stroke-width="6"/><path d="M-24 70Q-14 52 2 57" fill="none" stroke="#f6c839" stroke-width="6"/><path d="M-18 41l14-2 2 10q-8 8-14 2z" fill="#3a6fc8"/>${tx(-10,50,'280',7,'#fff')}<circle cx="18" cy="58" r="15.500" fill="#f2f2f2" stroke="#aaa"/><circle cx="18" cy="58" r="9" fill="none" stroke="#3d7187" stroke-width="1.600"/>${tx(18,62,'3D',10,'#333')}<path d="M18 44l2 4h-4z" fill="#e33"/>`,
      qt:`<circle cy="45" r="32" fill="#444c54"/><circle cy="45" r="20" fill="url(#fb)"/><path d="M0 45l10-4 23 36H20Q5 65 0 45z" fill="#333a40"/>`,
      itunes:`<circle cy="45" r="32" fill="#fbf9fc" stroke="url(#it)" stroke-width="3"/><path d="M-9 61V31L13 26v29" fill="none" stroke="url(#it)" stroke-width="4.500"/><path d="M-9 31l22-5v7l-22 5z" fill="#e8497c"/><ellipse cx="-13" cy="61" rx="6.500" ry="5.500" fill="#7d5cf0"/><ellipse cx="8" cy="56" rx="6.500" ry="5.500" fill="#4b86ee"/>`,
      photos:`<circle cy="45" r="32" fill="#f4f4f2"/>${petals}`,
      imovie:`<path d="M-4 9L8 31l27-4L19 47l10 25L1 60l-16 18 2-30-22-13 23-3z" fill="#eceaf2"/><path d="M-3 15L6 34l22-3L14 47l8 20L0 56l-12 14 2-24-17-10 18-2z" fill="url(#im)"/><rect x="-9" y="38" width="17" height="13" rx="2" fill="#eee"/><path d="M8 43l6-4v11l-6-4z" fill="#eee"/>`,
      garage:`<rect x="-19" y="29" width="46" height="45" rx="2" fill="#8d5a30"/><rect x="-19" y="29" width="46" height="8" fill="#222"/><rect x="-15" y="39" width="38" height="31" fill="#b0743e"/><path d="M6 10L-9 55" stroke="#5b3216" stroke-width="4"/><path d="M1 9h7l-2 9-5-1z" fill="#222"/><path d="M-15 42q6-1 6 6 8 2 7 11-1 16-13 17-14 0-13-13 0-7 8-9 0-9 5-12z" fill="#b0341a"/><path d="M-17 52q8-1 9 6t-7 10-9-5 7-11z" fill="#f4b140"/>`,
      stickies:`<path d="M-14 47l42-4-3 28-35 3z" fill="#f4ec78"/><path d="M-10 22l46 2-1 32-42-2z" fill="#f7f08a"/><path d="M-34 25L1 14l11 31-33 11z" fill="#fbf59b" stroke="#d8cf66" stroke-width=".5"/><text transform="rotate(-15 -10 35)" x="-10" y="33" text-anchor="middle" font-family="Roboto,sans-serif" font-style="italic" font-size="8" fill="#444"><tspan x="-10">Lou</tspan><tspan x="-10" dy="9">555-7361</tspan></text>${tx(21,41,'Eggs',9,'#e0402c','font-style="italic"')}${tx(4,65,'Milk',9,'#2d4f8f','font-style="italic"')}`,
      booth:`<path d="M-27 16h55v38h-55z" fill="#fff"/><path d="M-24 19h23v16h-23zM2 19h23v16H2z" fill="#b01120"/><path d="M-34 28l54-7 7 44-51 9z" fill="#fff"/><path d="M-31 31l22-3 3 17-22 3zM-6 27l22-3 3 17-22 3zM-28 51l22-3 3 17-22 3z" fill="#a4111f"/><g fill="#2c1a18"><circle cx="-19" cy="36" r="6"/><circle cx="6" cy="32" r="6"/><circle cx="-16" cy="56" r="6"/></g><g fill="#edc2a4"><circle cx="-19" cy="38" r="3.500"/><circle cx="6" cy="34" r="3.500"/><circle cx="-16" cy="58" r="3.500"/></g><circle cx="17" cy="57" r="16" fill="#2b2b2d"/><circle cx="17" cy="57" r="9" fill="#111" stroke="#555"/><circle cx="17" cy="57" r="4.500" fill="#3b5f96"/>`,
      printer:`<path d="M-24 23h48l9 16H-33z" fill="#d9dadb"/><rect x="-14" y="20" width="28" height="5" rx="2" fill="#f7f7f7"/><path d="M-33 38h66v26h-66z" fill="#ecedee"/><path d="M-33 56h66v13h-66z" fill="#dfe0e1" stroke="#aaa" stroke-width=".8"/><rect x="-22" y="34" width="44" height="20" fill="none" stroke="#c4c5c6"/><path d="M-8 37h16l-5 3h-6zM-6 63H6l-2 3h-8z" fill="#777"/>`,
      books:`<circle cy="45" r="31" fill="url(#ib)" stroke="#f6efe8" stroke-width="2.500"/><path d="M0 34q-9-6-20-3v28q12-2 20 3 8-5 20-3V31q-11-3-20 3z" fill="#f7f3ee"/><path d="M0 34v28" stroke="#d8cfc5"/>`,
      github:`<circle cy="45" r="32" fill="#efedf8"/><path d="M-19 25q5 0 10 3 9-2 18 0 5-3 10-3 2 5 1 9 3 5 2 11-1 12-13 14v18q-9 2-18 0V66q-10 3-14-6-3-3-1-4 6 4 15 4-12-3-12-15 0-6 3-11-2-4-1-9z" fill="url(#gh)"/>`,
      prefs:`<rect x="-32" y="15" width="64" height="60" rx="3" fill="url(#sp)"/><circle cy="45" r="26" fill="#222"/>${teeth(26,21,2.600,4,'#c4c9cc')}<circle cy="45" r="20" fill="none" stroke="#aeb3b6" stroke-width="4.500"/><path d="M0 45l-13-17M0 45h21M0 45l-13 17" stroke="#aeb3b6" stroke-width="4"/><circle cy="45" r="4.500" fill="#aeb3b6"/>`,
      gear:`<circle cy="45" r="32" fill="#8fc6ea"/><circle cy="45" r="11" fill="none" stroke="#fff" stroke-width="9"/>${teeth(6,13,9,8,'#fff')}`,
      preview:`<path d="M-25 16h56v42h-56z" fill="#e9e4d9"/><path d="M-21 19h49v30h-49z" fill="#9f8250"/><path d="M-34 27l52-9 8 44-51 12z" fill="#fff"/><path d="M-31 30l47-8 7 38-46 10z" fill="#5fa0d9"/><path d="M-27 49l46-7 4 18-46 10z" fill="#29598c"/><path d="M-27 56q20 5 48-3l2 9-46 9z" fill="#d9e4ea"/><path d="M7 46q13-8 25 0l-3 28q-8 6-17 0z" fill="#8e8576"/><circle cx="20" cy="49" r="12" fill="#c7d5dc" stroke="#333" stroke-width="3"/>`,
      xcode:`<path d="M-34 26L24 16l10 48-58 12z" fill="#2b95e6"/><path d="M-31 29l53-9 8 42-52 10z" fill="none" stroke="#9fd2f8"/><path d="M-20 64L0 27M14 60L-7 29M-25 53l51-9" fill="none" stroke="#a5d6fa" stroke-width="2.500"/><path d="M12 30l7 2-7 44q-4 3-7-1z" fill="#24282d"/><path d="M0 16Q8 10 20 12l14 3v8l-8-1-3 6-9-3 1-5q-8-5-15-4z" fill="#c3cad1"/><path d="M13 23l7 2-2 14-5-1z" fill="#dde2e6"/>`,
      sublime:`<path d="M-31 22h62l4 49q0 4-4 4h-62q-4 0-4-4z" fill="#e8e8e8"/><path d="M-26 14h52q3 0 3 3l2 44h-62l2-44q0-3 3-3z" fill="#5d5d5d"/><path d="M-31 61h62v7h-62z" fill="#262626"/><path d="M-26 14h52q3 0 3 3l1 14q-30 10-60 8l1-22q0-3 3-3z" fill="#fff" opacity=".16"/>${tx(-1,52,'S',38,'#f9972d','font-weight="900"')}`,
      term:`<rect x="-31" y="17" width="62" height="55" rx="2" fill="#222" stroke="#050505" stroke-width="3"/><rect x="-32" y="15.500" width="64" height="58" rx="3" fill="none" stroke="#a8a8a8" stroke-width=".8"/>${tx(-15,35,'&gt;_',17,'#fff','font-weight="700"')}`,
      activity:`<rect x="-31" y="17" width="62" height="55" rx="2" fill="#13211f" stroke="#050505" stroke-width="3"/><path d="M-28 26h56M-28 35h56M-28 54h56M-28 63h56M-20 19v51M-10 19v51M10 19v51M20 19v51" stroke="#2c4a44" stroke-width="1"/><path d="M-28 47h12l3-4 4 4 3-22 3 30 3-10 4 6 4-4 3 4 3-12 3 8h9" fill="none" stroke="#63c8b0" stroke-width="1.800"/>`,
      caliper:`<circle cx="1" cy="15" r="4.500" fill="none" stroke="#b7b9bb" stroke-width="2.500"/><path d="M-1 19L-4 34Q-24 45-25 60q0 6 6 7Q-22 52-8 42L1 30l9 12Q23 52 20 67q7-1 6-8Q25 45 6 34L3 19z" fill="#c1c3c5" stroke="#777" stroke-width=".6"/><path d="M-2 32h26M20 28v8" stroke="#aaadb0" stroke-width="2.500"/><path d="M-13 53h26l2 14h-30z" fill="#2a2b2e"/>${tx(0,61,'I-COW-MCE',4,'#aaa')}<path d="M-11 68l-2 10M-6 68l-1 10M0 68v10M6 68l1 10M11 68l2 10" stroke="#ccc" stroke-width="2"/>`,
      wing:`<circle cx="3" cy="45" r="30" fill="url(#wr)" stroke="#4a3a3a" stroke-width="1"/><path d="M-13 15Q-20 11-27 14q-6 4-4 14 3 14 13 24-1 5-3 8 9-3 14-1 8 6 18 5 10 1 21 6 0-9-9-15-8-5-12-7-1-11-11-22-5 5-3 14-11-7-15-17-1-6 5-8z" fill="#b8bbbe" stroke="#e3e4e5" stroke-width="1"/>`,
      nodes:`<path d="M-20 24H20V60H-20z" fill="none" stroke="#000" stroke-width="4.500"/>${[[-32,12],[6,12],[-32,50],[6,50]].map(([x,y])=>`<rect x="${x+2}" y="${y+2}" width="19" height="19" fill="#ffee26" stroke="#fc1320" stroke-width="5"/>`).join('')}`,
      doc:`<rect x="-26" y="9" width="52" height="69" fill="#fff" stroke="#bbb" stroke-width=".5"/><g transform="translate(0 14) scale(.64)">${pages(1.0)}</g>`,
      cloud:`<path d="M-28 13h56v54h-56z" fill="#351510" stroke="#ed4326" stroke-width="3"/><path d="M-10 12q5-5 11-1 7-5 11 2z" fill="#54b436"/><circle cy="48" r="32" fill="#a4cb2d"/><path d="M-16 62q-9-1-9-9 0-7 7-8 1-14 14-16 13 0 15 12 13 1 12 12-1 8-9 9z" fill="#fff"/><rect x="-10" y="40" width="19" height="18" fill="#6f9e22"/><path d="M-5 42v14M5 42v14M-5 49H5" stroke="#fff" stroke-width="1.500"/>`,
      relay:`<path d="M-18 9h20l8 5v20h-28z" fill="#eee"/><rect x="-17" y="13" width="36" height="65" fill="#1561d2"/><path d="M0 20l12 13-12-3z" fill="#fff"/><path d="M-18 16v60" stroke="#16233c" stroke-width="4" stroke-dasharray="4 2"/><circle cx="1" cy="44" r="4" fill="none" stroke="#fff"/>${tx(1,54,'relay',6,'#fff','font-weight="700"')}`,
      w1:sheet(`<path d="M-34 24h69v3h-69z" fill="#d0d0d0"/><rect x="-21" y="36" width="32" height="29" fill="#c90d1c"/><path d="M-18 45h10M-18 49h15" stroke="#f8b0b0"/><rect x="11" y="27" width="18" height="38" fill="#fff"/>`)+`<g transform="translate(24 48) scale(.38)">${pages()}</g>`,
      w2:excelWin, w3:excelWin,
      w4:`<rect x="-35" y="28" width="70" height="34" fill="#fff" stroke="#aaa" stroke-width=".6"/><path d="M-14 34h10v12h-10zM-14 51h10v10h-10z" fill="#e34a29"/><path d="M-8 34h4v12h-4z" fill="#2c6bc0"/><path d="M-1 41h14M-1 57h14M-1 44h10" stroke="#f0a080"/><path d="M27 31h7M27 34h7M27 37h7" stroke="#4a8" stroke-width="2"/><g transform="translate(24 48) scale(.38)">${pages()}</g>`,
      trash:`<path d="M-22 20L-13 10l8 5 6-6 9 4 9 5 2 7z" fill="#e8e8e8" stroke="#555" stroke-width=".8"/><path d="M-12 18l5 6M3 15l5 8" stroke="#333" stroke-width="4"/><circle cx="-6" cy="18" r="3" fill="#4aa8c8"/><path d="M-27 19q27 12 54 0l-8 53q-19 11-38 0z" fill="#e7e7e7" opacity=".93"/><ellipse cy="20" rx="27" ry="6" fill="none" stroke="#fafafa" stroke-width="2"/><path d="M-12 32l-6 20 10 16M8 30l8 16-12 22M-4 40l12 12" stroke="#c9c9c9" fill="none" stroke-width="2"/>`
    };
    /* name, slot centre, running */
    const list = [['finder',104,1],['dash',182,0],['store',260,1],['mail',338,1],['msg',416,1],['contacts',494,1],['cal',572,1],['chrome',652,1],['numbers',730,1],['keynote',808,0],['pages',886,1],['word',964,1],['excel',1042,1],['ppt',1120,1],['notes',1198,1],['calc',1276,1],['remind',1354,1],['textedit',1432,1],['maps',1510,0],['qt',1588,1],['itunes',1667,0],['photos',1746,1],['imovie',1824,1],['garage',1902,0],['stickies',1980,1],['booth',2059,0],['printer',2136,1],['books',2214,0],['github',2292,1],['prefs',2370,1],['gear',2448,1],['preview',2527,0],['xcode',2604,1],['sublime',2682,1],['term',2760,1],['activity',2840,1],['caliper',2918,1],['wing',2996,1],['nodes',3074,1],['sep',3133,0],['doc',3187,0],['cloud',3265,0],['relay',3344,0],['w1',3423,0],['w2',3501,0],['w3',3579,0],['w4',3657,0],['trash',3735,0]];
    const cells = list.map(([n,cx,dot]) => n==='sep' ? [cx-1,2,'<i></i>'] : [cx-22,44,`<svg width="44" height="96" viewBox="-22 0 44 96" style="overflow:visible;display:block">${G[n]}${dot?'<circle cy="88" r="4" fill="#1c150f"/>':''}</svg>`]);
    attach(this, `<style>
:host{display:flex;box-sizing:border-box;width:3720px;height:96px;border-radius:10px 10px 0 0;background:linear-gradient(90deg,#86704c 0,#7b6a50 6%,#75685a 12%,#786b68 17%,#a39c98 22%,#b0a9a2 28%,#aea697 34%,#aca59c 42%,#a39c98 52%,#a09996 60%,#938c88 66%,#9d9694 74%,#9b958e 84%,#928778 92%,#8b8073)}
.shade{display:flex;height:96px;border-radius:inherit}
i{display:block;width:2px;height:72px;background:#6f6863}
</style><svg width="0" height="0" style="position:absolute"><defs>
<linearGradient id="fb" x2="0" y2="1"><stop offset="0" stop-color="#29c4fb"/><stop offset="1" stop-color="#1c62e8"/></linearGradient>
<linearGradient id="mb" x2="0" y2="1"><stop offset="0" stop-color="#62c0fb"/><stop offset="1" stop-color="#1a86f5"/></linearGradient>
<linearGradient id="it" x2="0" y2="1"><stop offset="0" stop-color="#f5425c"/><stop offset=".55" stop-color="#b75be8"/><stop offset="1" stop-color="#35b6f5"/></linearGradient>
<linearGradient id="im" x2="0" y2="1"><stop offset="0" stop-color="#b64cf0"/><stop offset="1" stop-color="#4a27ad"/></linearGradient>
<linearGradient id="ib" x2="0" y2="1"><stop offset="0" stop-color="#fcae26"/><stop offset="1" stop-color="#e4521c"/></linearGradient>
<linearGradient id="gh" x2="0" y2="1"><stop offset="0" stop-color="#40276f"/><stop offset="1" stop-color="#8a2d96"/></linearGradient>
<linearGradient id="sp" x2="0" y2="1"><stop offset="0" stop-color="#c3d2d9"/><stop offset="1" stop-color="#7c8185"/></linearGradient>
<radialGradient id="wr" cy=".8"><stop offset="0" stop-color="#d84a52"/><stop offset="1" stop-color="#6d2026"/></radialGradient>
</defs></svg><div class="shade">${strip(60,cells)}</div>`);
  }
}

/* Band of the windows further back, seen between front window and dock. */
class RearBand extends HTMLElement {
  connectedCallback() {
    const day = (x, n, c) => [x, 16, `<span style="color:${c}">${n}</span>`];
    attach(this, `<style>
:host{display:flex;width:3840px;height:111px;background:linear-gradient(90deg,#2d2310,#4c3b18 60px,#4c3b18 50%,#34270f)}
.l{width:700px;margin-left:40px;height:22px;background:#434343;border-radius:0 0 0 10px;flex:none;border-left:4px solid #77797c;box-sizing:border-box}
.c{display:flex;align-items:flex-start;width:3040px;height:44px;background:#4c4c4c;color:#262626;font:30px/32px "Liberation Sans",sans-serif;padding-top:3px;box-sizing:border-box;flex:none}
.r{width:60px;height:69px;background:linear-gradient(#5a5a5a,#8d8d8d 22px,#999 23px,#c4c4c4);flex:none}
</style><div class="l"></div><div class="c">${strip(740,[[766,29,t(28,'29')],[822,29,t(28,'30','color:#0c0c0c')],day(886,1,'#383838'),day(943,2,'#383838'),day(997,3,'#303030'),day(1053,4,'#303030'),day(1109,5,'#303030')])}</div><div class="r"></div>`);
  }
}

class MacDesktop extends HTMLElement {
  connectedCallback() {
    attach(this, `<style>
:host{display:flex;flex-direction:column;width:3840px;height:2400px;overflow:hidden}
.d{position:relative;flex:1;background:linear-gradient(#14171d,#2c3743 40%,#2c3743 88%,#3c2e14);overflow:hidden}
.d>*{position:absolute}
</style><menu-bar></menu-bar><div class="d">
<rear-band style="left:0;top:2245px"></rear-band>
<back-window style="left:0;top:2px"></back-window>
<div style="left:14px;right:4px;top:2245px;height:4px;background:#14191d"></div>
<div style="left:36px;right:4px;top:2244px;height:2px;background:#6c7072"></div>
<browser-window style="left:36px;top:2px;box-shadow:-1px 0 0 #8a8a8a"></browser-window>
<dock-bar style="left:60px;top:2260px"></dock-bar></div>`);
  }
}
Object.entries({'menu-bar':MenuBar,'tab-strip':TabStrip,'tool-bar':ToolBar,'bookmark-bar':BookmarkBar,'network-graph':NetworkGraph,'page-section':PageSection,'data-table':DataTable,'bar-chart':BarChart,'browser-window':BrowserWindow,'back-window':BackWindow,'dock-bar':DockBar,'rear-band':RearBand,'mac-desktop':MacDesktop,'fit-text':FitText}).forEach(([n,c])=>customElements.define(n,c));
</script>
</body>
</html>
